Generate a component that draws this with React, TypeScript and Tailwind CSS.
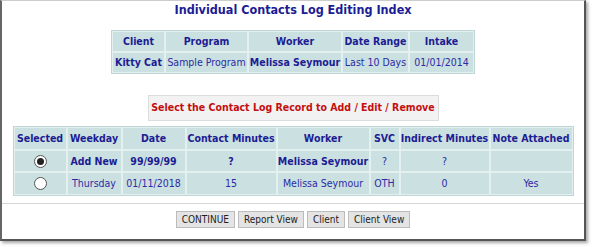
import { ReactNode } from 'react'

const font = { fontFamily: '"DejaVu Sans Condensed", "DejaVu Sans", Tahoma, sans-serif' }

function Th({ children, w, h = 'h-[21px]' }: { children: ReactNode; w: string; h?: string }) {
  return (
    <th className={`${w} ${h} whitespace-nowrap border border-[#e4efef] p-0 text-center font-bold leading-none text-[#1c1c94]`}>
      {children}
    </th>
  )
}

function Td({ children, bold, h = 'h-[21px]' }: { children?: ReactNode; bold?: boolean; h?: string }) {
  return (
    <td className={`${h} whitespace-nowrap border border-[#e4efef] p-0 text-center leading-none ${bold ? 'font-bold text-[#1c1c94]' : 'font-normal text-[#2b2ba6]'}`}>
      {children}
    </td>
  )
}

function Radio({ checked }: { checked?: boolean }) {
  return (
    <span className="mx-auto grid h-[13px] w-[13px] place-items-center rounded-full border border-[#555] bg-white">
      {checked && <span className="h-[7px] w-[7px] rounded-full bg-[#222]" />}
    </span>
  )
}

function Btn({ children }: { children: ReactNode }) {
  return (
    <button className="h-[17px] whitespace-nowrap border border-[#bcbcbc] bg-[#e4e4e4] px-[5px] text-[10px] leading-none text-[#222]">
      {children}
    </button>
  )
}

export default function App() {
  return (
    <div className="h-[247px] w-[593px] bg-white" style={font}>
      <div className="flex h-[241px] w-[586px] flex-col items-center border-b-2 border-l-2 border-r-2 border-t border-b-[#555] border-l-[#666] border-r-[#555] border-t-[#ccc] bg-white shadow-[2px_2px_3px_rgba(0,0,0,0.35)]">
        {/* 제목 */}
        <h1 className="mt-[1px] h-[16px] whitespace-nowrap text-[12.5px] font-bold leading-[16px] text-[#1c1c94]">
          Individual Contacts Log Editing Index
        </h1>

        {/* 조건 */}
        <table className="mt-[12px] table-fixed border-separate border-spacing-0 border border-[#bfd6d6] bg-[#cbe0e0] text-[10.5px]">
          <thead>
            <tr>
              <Th w="w-[53px]">Client</Th>
              <Th w="w-[83px]">Program</Th>
              <Th w="w-[94px]">Worker</Th>
              <Th w="w-[67px]">Date Range</Th>
              <Th w="w-[65px]">Intake</Th>
            </tr>
          </thead>
          <tbody>
            <tr>
              <Td bold>Kitty Cat</Td>
              <Td>Sample Program</Td>
              <Td bold>Melissa Seymour</Td>
              <Td>Last 10 Days</Td>
              <Td>01/01/2014</Td>
            </tr>
          </tbody>
        </table>

        {/* 안내 */}
        <div className="mt-[21px] flex h-[26px] w-[291px] items-center justify-center whitespace-nowrap border border-[#dcdcdc] bg-[#f2f2f2] text-[10.5px] font-bold text-[#c40f0f]">
          Select the Contact Log Record to Add / Edit / Remove
        </div>

        {/* 기록 */}
        <table className="mt-[5px] table-fixed border-separate border-spacing-0 border border-[#bfd6d6] bg-[#cbe0e0] text-[10.5px]">
          <thead>
            <tr>
              <Th w="w-[53px]" h="h-[23px]">Selected</Th>
              <Th w="w-[55px]" h="h-[23px]">Weekday</Th>
              <Th w="w-[64px]" h="h-[23px]">Date</Th>
              <Th w="w-[91px]" h="h-[23px]">Contact Minutes</Th>
              <Th w="w-[93px]" h="h-[23px]">Worker</Th>
              <Th w="w-[30px]" h="h-[23px]">SVC</Th>
              <Th w="w-[90px]" h="h-[23px]">Indirect Minutes</Th>
              <Th w="w-[83px]" h="h-[23px]">Note Attached</Th>
            </tr>
          </thead>
          <tbody>
            <tr>
              <Td h="h-[22px]"><Radio checked /></Td>
              <Td h="h-[22px]" bold>Add New</Td>
              <Td h="h-[22px]" bold>99/99/99</Td>
              <Td h="h-[22px]" bold>?</Td>
              <Td h="h-[22px]" bold>Melissa Seymour</Td>
              <Td h="h-[22px]">?</Td>
              <Td h="h-[22px]">?</Td>
              <Td h="h-[22px]" />
            </tr>
            <tr>
              <Td h="h-[23px]"><Radio /></Td>
              <Td h="h-[23px]">Thursday</Td>
              <Td h="h-[23px]">01/11/2018</Td>
              <Td h="h-[23px]">15</Td>
              <Td h="h-[23px]">Melissa Seymour</Td>
              <Td h="h-[23px]">OTH</Td>
              <Td h="h-[23px]">0</Td>
              <Td h="h-[23px]">Yes</Td>
            </tr>
          </tbody>
        </table>

        <div className="mt-[7px] h-px w-full bg-[#d6d6d6]" />

        {/* 버튼 */}
        <div className="mt-[7px] flex gap-[3px]">
          <Btn>CONTINUE</Btn>
          <Btn>Report View</Btn>
          <Btn>Client</Btn>
          <Btn>Client View</Btn>
        </div>
      </div>
    </div>
  )
}
